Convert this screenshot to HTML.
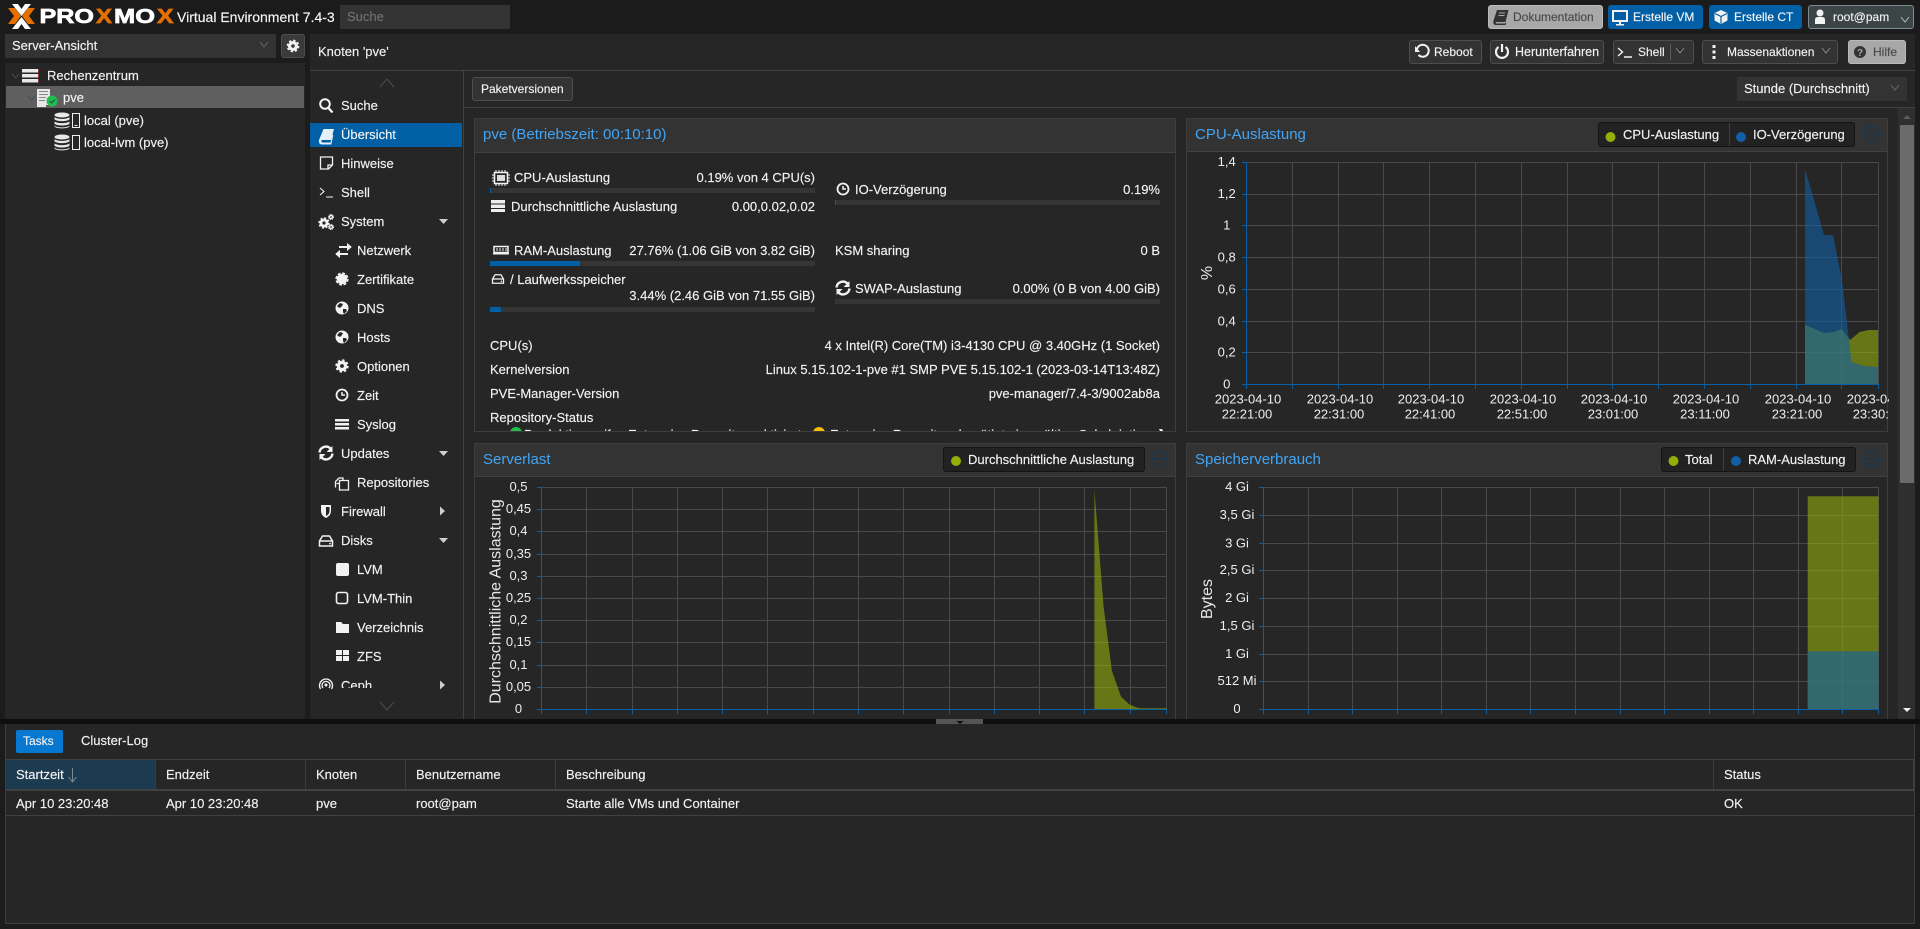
<!DOCTYPE html>
<html lang="de"><head><meta charset="utf-8"><title>pve - Proxmox Virtual Environment</title>
<style>
html,body{margin:0;padding:0;width:1920px;height:929px;overflow:hidden;background:#1c1c1c}
body{font:13px "Liberation Sans",Arial,sans-serif;color:#f2f2f2;position:relative}
.b,.t,.btn{position:absolute;box-sizing:border-box}
.t{white-space:nowrap;line-height:16px;height:16px;-webkit-text-stroke:.15px currentColor}
.r{text-align:right}
.btn{border-radius:3px;border:1px solid #4e4e4e;background:#333}
.f12{font-size:12px}
.h{color:#42a5f5;font-size:15px;line-height:18px;height:18px;-webkit-text-stroke:0}
.p{background:#262626;border:1px solid #3d3d3d}
.ph{background:#333;border-bottom:1px solid #414141}
.bar{position:absolute;height:5px;background:#353535}
.bar i{display:block;height:5px;background:#005fa5}
.leg{position:absolute;background:#222;border:1px solid #141414;border-radius:3px;box-sizing:border-box}
svg{position:absolute;left:0;top:0}
svg text{font-family:"Liberation Sans",Arial,sans-serif}
.tk{font-size:13px;fill:#eee;text-anchor:middle}
</style></head><body>

<!-- top -->
<div class="b" style="left:0;top:0;width:1920px;height:34px;background:#1b1b1b"></div>
<div class="t" style="left:177px;top:9px;font-size:14px;color:#f5f5f5">Virtual Environment 7.4-3</div>
<div class="b" style="left:340px;top:5px;width:170px;height:24px;background:#333"></div>
<div class="t" style="left:347px;top:9px;color:#707070">Suche</div>

<!-- left -->
<div class="b" style="left:5px;top:34px;width:271px;height:24px;background:#333"></div>
<div class="t" style="left:12px;top:38px">Server-Ansicht</div>
<div class="btn" style="left:281px;top:34px;width:24px;height:24px;background:#3a3a3a"></div>
<div class="b" style="left:5px;top:63px;width:300px;height:656px;background:#262626"></div>
<div class="b" style="left:6px;top:86px;width:298px;height:22px;background:#5f5f5f"></div>
<div class="t" style="left:47px;top:68px">Rechenzentrum</div>
<div class="t" style="left:63px;top:90px">pve</div>
<div class="t" style="left:84px;top:113px">local (pve)</div>
<div class="t" style="left:84px;top:135px">local-lvm (pve)</div>

<!-- main -->
<div class="b" style="left:310px;top:34px;width:1605px;height:685px;background:#262626"></div>
<div class="b" style="left:310px;top:70px;width:1605px;height:1px;background:#414141"></div>
<div class="b" style="left:463px;top:71px;width:1px;height:648px;background:#414141"></div>
<div class="b" style="left:464px;top:107px;width:1451px;height:1px;background:#414141"></div>
<div class="t" style="left:318px;top:44px">Knoten 'pve'</div>

<!-- top buttons -->
<div class="btn" style="left:1488px;top:5px;width:115px;height:24px;background:#a8a8a8;border-color:#bbb"></div>
<div class="t f12" style="left:1513px;top:9px;color:#4a4a4a">Dokumentation</div>
<div class="btn" style="left:1608px;top:5px;width:95px;height:24px;background:#005fa5;border-color:#005fa5"></div>
<div class="t f12" style="left:1633px;top:9px">Erstelle VM</div>
<div class="btn" style="left:1709px;top:5px;width:93px;height:24px;background:#005fa5;border-color:#005fa5"></div>
<div class="t f12" style="left:1734px;top:9px">Erstelle CT</div>
<div class="btn" style="left:1808px;top:5px;width:106px;height:24px;background:#3b4545;border-color:#7c8c8c"></div>
<div class="t f12" style="left:1833px;top:9px">root@pam</div>

<!-- toolbar buttons -->
<div class="btn" style="left:1409px;top:40px;width:73px;height:24px"></div>
<div class="t f12" style="left:1434px;top:44px">Reboot</div>
<div class="btn" style="left:1490px;top:40px;width:114px;height:24px"></div>
<div class="t f12" style="left:1515px;top:44px;font-size:12.5px">Herunterfahren</div>
<div class="btn" style="left:1613px;top:40px;width:81px;height:24px"></div>
<div class="b" style="left:1670px;top:44px;width:1px;height:16px;background:#5a5a5a"></div>
<div class="t f12" style="left:1638px;top:44px">Shell</div>
<div class="btn" style="left:1702px;top:40px;width:136px;height:24px"></div>
<div class="t f12" style="left:1727px;top:44px">Massenaktionen</div>
<div class="btn" style="left:1848px;top:40px;width:58px;height:24px;background:#a8a8a8;border-color:#bbb"></div>
<div class="t f12" style="left:1873px;top:44px;color:#4a4a4a">Hilfe</div>

<!-- menu -->
<div class="b" style="left:310px;top:123px;width:152px;height:24px;background:#005fa5"></div>
<div class="t" style="left:341px;top:98px">Suche</div>
<div class="t" style="left:341px;top:127px">Übersicht</div>
<div class="t" style="left:341px;top:156px">Hinweise</div>
<div class="t" style="left:341px;top:185px">Shell</div>
<div class="t" style="left:341px;top:214px">System</div>
<div class="t" style="left:357px;top:243px">Netzwerk</div>
<div class="t" style="left:357px;top:272px">Zertifikate</div>
<div class="t" style="left:357px;top:301px">DNS</div>
<div class="t" style="left:357px;top:330px">Hosts</div>
<div class="t" style="left:357px;top:359px">Optionen</div>
<div class="t" style="left:357px;top:388px">Zeit</div>
<div class="t" style="left:357px;top:417px">Syslog</div>
<div class="t" style="left:341px;top:446px">Updates</div>
<div class="t" style="left:357px;top:475px">Repositories</div>
<div class="t" style="left:341px;top:504px">Firewall</div>
<div class="t" style="left:341px;top:533px">Disks</div>
<div class="t" style="left:357px;top:562px">LVM</div>
<div class="t" style="left:357px;top:591px">LVM-Thin</div>
<div class="t" style="left:357px;top:620px">Verzeichnis</div>
<div class="t" style="left:357px;top:649px">ZFS</div>
<div class="b" style="left:341px;top:678px;width:100px;height:10px;overflow:hidden"><div class="t" style="left:0;top:0">Ceph</div></div>

<!-- content toolbar -->
<div class="btn" style="left:472px;top:77px;width:101px;height:24px"></div>
<div class="t f12" style="left:481px;top:81px">Paketversionen</div>
<div class="b" style="left:1737px;top:77px;width:170px;height:24px;background:#333"></div>
<div class="t" style="left:1744px;top:81px">Stunde (Durchschnitt)</div>

<!-- scrollbar -->
<div class="b" style="left:1898px;top:108px;width:17px;height:611px;background:#2f2f2f"></div>
<div class="b" style="left:1900px;top:125px;width:14px;height:358px;background:#6b6b6b"></div>

<!-- panel 1 -->
<div class="b p" style="left:474px;top:118px;width:702px;height:314px"></div>
<div class="b ph" style="left:475px;top:119px;width:700px;height:34px"></div>
<div class="t h" style="left:483px;top:126px">pve (Betriebszeit: 00:10:10)</div>

<div class="t" style="left:514px;top:170px">CPU-Auslastung</div>
<div class="t r" style="left:600px;width:215px;top:170px">0.19% von 4 CPU(s)</div>
<div class="bar" style="left:490px;top:188px;width:325px"><i style="width:1px"></i></div>
<div class="t" style="left:511px;top:199px">Durchschnittliche Auslastung</div>
<div class="t r" style="left:700px;width:115px;top:199px">0.00,0.02,0.02</div>
<div class="t" style="left:514px;top:243px">RAM-Auslastung</div>
<div class="t r" style="left:600px;width:215px;top:243px">27.76% (1.06 GiB von 3.82 GiB)</div>
<div class="bar" style="left:490px;top:261px;width:325px"><i style="width:90px"></i></div>
<div class="t" style="left:510px;top:272px">/ Laufwerksspeicher</div>
<div class="t r" style="left:600px;width:215px;top:288px">3.44% (2.46 GiB von 71.55 GiB)</div>
<div class="bar" style="left:490px;top:307px;width:325px"><i style="width:11px"></i></div>

<div class="t" style="left:855px;top:182px">IO-Verzögerung</div>
<div class="t r" style="left:1060px;width:100px;top:182px">0.19%</div>
<div class="bar" style="left:835px;top:200px;width:325px"><i style="width:1px"></i></div>
<div class="t" style="left:835px;top:243px">KSM sharing</div>
<div class="t r" style="left:1060px;width:100px;top:243px">0 B</div>
<div class="t" style="left:855px;top:281px">SWAP-Auslastung</div>
<div class="t r" style="left:960px;width:200px;top:281px">0.00% (0 B von 4.00 GiB)</div>
<div class="bar" style="left:835px;top:299px;width:325px"></div>

<div class="t" style="left:490px;top:338px">CPU(s)</div>
<div class="t r" style="left:700px;width:460px;top:338px">4 x Intel(R) Core(TM) i3-4130 CPU @ 3.40GHz (1 Socket)</div>
<div class="t" style="left:490px;top:362px">Kernelversion</div>
<div class="t r" style="left:700px;width:460px;top:362px">Linux 5.15.102-1-pve #1 SMP PVE 5.15.102-1 (2023-03-14T13:48Z)</div>
<div class="t" style="left:490px;top:386px">PVE-Manager-Version</div>
<div class="t r" style="left:700px;width:460px;top:386px">pve-manager/7.4-3/9002ab8a</div>
<div class="t" style="left:490px;top:410px">Repository-Status</div>
<div class="b" style="left:475px;top:424px;width:700px;height:7px;overflow:hidden">
  <div class="b" style="left:35px;top:3px;width:12px;height:12px;border-radius:50%;background:#21bf4b"></div>
  <div class="t" style="left:49px;top:3px">Produktionsreifes Enterprise Repository aktiviert</div>
  <div class="b" style="left:338px;top:3px;width:12px;height:12px;border-radius:50%;background:#fbbc05"></div>
  <div class="t" style="left:355px;top:3px">Enterprise Repository benötigt eine gültige Subskription</div>
  <div class="t" style="left:682px;top:3px">❯</div>
</div>

<!-- panel 2 -->
<div class="b p" style="left:1186px;top:118px;width:702px;height:314px"></div>
<div class="b ph" style="left:1187px;top:119px;width:700px;height:33px"></div>
<div class="t h" style="left:1195px;top:126px">CPU-Auslastung</div>
<div class="leg" style="left:1598px;top:122px;width:257px;height:25px"></div>
<div class="b" style="left:1729px;top:123px;width:1px;height:23px;background:#3f3f3f"></div>
<div class="t" style="left:1623px;top:127px">CPU-Auslastung</div>
<div class="t" style="left:1753px;top:127px">IO-Verzögerung</div>

<!-- panel 3 -->
<div class="b p" style="left:474px;top:443px;width:702px;height:290px"></div>
<div class="b ph" style="left:475px;top:444px;width:700px;height:33px"></div>
<div class="t h" style="left:483px;top:451px">Serverlast</div>
<div class="leg" style="left:943px;top:447px;width:202px;height:25px"></div>
<div class="t" style="left:968px;top:452px">Durchschnittliche Auslastung</div>

<!-- panel 4 -->
<div class="b p" style="left:1186px;top:443px;width:702px;height:290px"></div>
<div class="b ph" style="left:1187px;top:444px;width:700px;height:33px"></div>
<div class="t h" style="left:1195px;top:451px">Speicherverbrauch</div>
<div class="leg" style="left:1661px;top:447px;width:195px;height:25px"></div>
<div class="b" style="left:1723px;top:448px;width:1px;height:23px;background:#3f3f3f"></div>
<div class="t" style="left:1685px;top:452px">Total</div>
<div class="t" style="left:1748px;top:452px">RAM-Auslastung</div>

<!-- graphics -->
<svg width="1920" height="929" viewBox="0 0 1920 929">
<defs>
<clipPath id="cb"><rect x="0" y="0" width="1920" height="719"/></clipPath>
<clipPath id="cr"><rect x="1186" y="100" width="703" height="332"/></clipPath>
<g id="glob"><circle r="6.5" fill="#f2f2f2"/><path d="M-5 -2l3-3 3 1-1 2-2 2-2-1zM1 1l3 0 1 2-3 3-1-2z" fill="#262626"/></g>
<g id="cog"><circle r="3.600" fill="none" stroke="#f2f2f2" stroke-width="3.400"/><circle r="5.600" fill="none" stroke="#f2f2f2" stroke-width="2.200" stroke-dasharray="2.300 2.100"/></g>
<g id="swap"><path d="M-6.5 -.5a6.5 6.5 0 0 1 11-4M6.5 .5a6.5 6.5 0 0 1-11 4" fill="none" stroke="#f2f2f2" stroke-width="2.400"/><path d="M6.5 -7v6h-6zM-6.5 7v-6h6z" fill="#f2f2f2"/></g>
<g id="clk"><circle r="5.5" fill="none" stroke="#f2f2f2" stroke-width="1.8"/><path d="M0 -3v3h3" fill="none" stroke="#f2f2f2" stroke-width="1.5"/></g>
<g id="hdd"><path d="M-3.5 -5h7l3 5v5h-13v-5zM-6.5 0h13" fill="none" stroke="#f2f2f2" stroke-width="1.5"/><circle cx="4" cy="2.6" r=".9" fill="#f2f2f2"/></g>
<g id="shell"><path d="M-7 -4l4.5 4-4.500 4M-1 5h8" fill="none" stroke="#f2f2f2" stroke-width="1.4"/></g>
<g id="cyl" fill="#e8e8e8"><ellipse cy="-5.500" rx="7.500" ry="2.500"/><path d="M-7.500 -3.500c2 2.500 13 2.500 15 0v2.300c-2 2.500-13 2.500-15 0zM-7.500 .8c2 2.500 13 2.500 15 0v2.300c-2 2.500-13 2.500-15 0zM-7.500 5c2 2.500 13 2.500 15 0v1c-2 2.500-13 2.500-15 0z"/></g>
</defs>

<!-- logo -->
<path d="M8 8h7l6 8-6 8H8l6-8zM35 8h-7l-6 8 6 8h7l-6-8z" fill="#e57000"/>
<path d="M12 4h6l3.500 5L25 4h6l-9.500 12zM12 29h6l3.500-5 3.500 5h6l-9.500-12z" fill="#fff"/>
<g font-weight="700" font-size="20" stroke-width=".7">
<text x="39.500" y="23" textLength="54.500" lengthAdjust="spacingAndGlyphs" fill="#fff" stroke="#fff">PRO</text>
<text x="96" y="23" textLength="16" lengthAdjust="spacingAndGlyphs" fill="#e57000" stroke="#e57000">X</text>
<text x="114" y="23" textLength="41" lengthAdjust="spacingAndGlyphs" fill="#fff" stroke="#fff">MO</text>
<text x="157" y="23" textLength="16.500" lengthAdjust="spacingAndGlyphs" fill="#e57000" stroke="#e57000">X</text>
</g>

<!-- combo chevrons -->
<g fill="none" stroke-width="1">
<path d="M260 42l4 5 4-5" stroke="#6a6a6a"/>
<path d="M1901 17l4 5 4-5" stroke="#bbb"/>
<path d="M1676 48l4 5 4-5M1822 48l4 5 4-5" stroke="#8a8a8a"/>
<path d="M1891 85l4 5 4-5" stroke="#6a6a6a"/>
<path d="M380 87l7-8 7 8M380 702l7 8 7-8" stroke="#4e4e4e"/>
<path d="M12 74l3.500 4 3.500-4M28 96l3.500 4 3.500-4" stroke="#4c4c4c"/>
</g>
<g transform="translate(293,46) scale(.95)"><use href="#cog"/></g>

<!-- tree icons -->
<g fill="#e8e8e8">
<rect x="22" y="69" width="17" height="3.500"/><rect x="22" y="74" width="17" height="3.500"/><rect x="22" y="79" width="17" height="3.500"/>
<path d="M38 69h1v3.500h-1zM38 74h1v3.500h-1zM38 79h1v3.500h-1z" fill="#933"/>
<path d="M37 89h13v16h-4v2h-9z"/><path d="M39 91h9v1h-9zM39 94h9v1h-9zM39 97h7v1h-7zM39 100h6v1h-6z" fill="#888"/>
</g>
<circle cx="52" cy="101" r="5.500" fill="#21bf4b"/><path d="M49.500 101l2 2 3.500-3.500" fill="none" stroke="#165" stroke-width="1.300"/>
<use href="#cyl" x="62" y="120.500"/><use href="#cyl" x="62" y="142.500"/>
<g fill="none" stroke="#eee"><rect x="72.500" y="113.500" width="7" height="14"/><rect x="72.500" y="135.500" width="7" height="14"/></g>
<path d="M74.500 125.500h3" stroke="#eee"/>

<!-- button icons -->
<g>
<path d="M1497 10h11.500l-3 12h-9c-1 0-1 1.500 0 1.500h8.500l.8-1 .5.800-1 1.700h-9.500c-2 0-3-2-2.300-4.500z" fill="#333"/><path d="M1499 13h6M1498.500 15.500h6" stroke="#a8a8a8"/>
<rect x="1613" y="11" width="14" height="10" fill="none" stroke="#f2f2f2" stroke-width="2"/><path d="M1616 24h8v1.500h-8zM1619 22h2v2h-2z" fill="#f2f2f2"/>
<path d="M1721 10l6.500 3v7.500l-6.500 3.500-6.500-3.500V13z" fill="#f2f2f2"/><path d="M1715 13.500l6 3 6-3M1721 16.500v7" fill="none" stroke="#005fa5" stroke-width="1.200"/>
<circle cx="1820" cy="13" r="3.500" fill="#f2f2f2"/><path d="M1815 24v-4c0-3 2-3 5-3s5 0 5 3v4z" fill="#f2f2f2"/>
<path d="M1417 49a6 6 0 1 1 1.500 6" fill="none" stroke="#f2f2f2" stroke-width="2"/><path d="M1415 46v6h5z" fill="#f2f2f2"/>
<path d="M1498.500 47a6 6 0 1 0 7 0" fill="none" stroke="#f2f2f2" stroke-width="2.200"/><path d="M1502 44v8" stroke="#f2f2f2" stroke-width="2.200"/>
<use href="#shell" x="1625" y="52"/>
<path d="M1712.500 45h3v3h-3zM1712.500 50.500h3v3h-3zM1712.500 56h3v3h-3z" fill="#f2f2f2"/>
<circle cx="1860" cy="52" r="6" fill="#333"/><text x="1860" y="56" font-size="10" font-weight="700" fill="#a8a8a8" text-anchor="middle">?</text>
</g>

<!-- menu icons -->
<g fill="none" stroke="#f2f2f2">
<circle cx="325" cy="104" r="4.800" stroke-width="2"/><path d="M328.500 108l4 4.500" stroke-width="2.300"/>
<path d="M323.500 129h10.500l-3 11h-8.500c-1.500 0-1.500 2.500 0 2.500h8l2-8 .8 1-2 9h-9.300c-2.500 0-3.500-2-3-4.500z" stroke="none" fill="#e6f0f8"/>
<path d="M320.500 157h12v8l-4 4h-8zM332 165h-4v4" stroke-width="1.300"/>
<path d="M320 188l4 3.500-4 3.500M326 197h7" stroke-width="1.100"/>
<path d="M339 247h12M336 254h12" stroke-width="2"/>
<path d="M351 247l-3.500-3v6zM336 254l3.500-3v6z" fill="#f2f2f2"/>
</g>
<g transform="translate(324,223) scale(.85)"><use href="#cog"/></g>
<g transform="translate(331,217) scale(.45)"><use href="#cog"/></g>
<g transform="translate(331,227) scale(.45)"><use href="#cog"/></g>
<g fill="#f2f2f2">
<circle cx="342" cy="279" r="5.300"/><circle cx="342" cy="279" r="5.900" fill="none" stroke="#f2f2f2" stroke-width="1.500" stroke-dasharray="2.900 1.730"/>
<path d="M335 419h14v2.500h-14zM335 423h14v2.500h-14zM335 427h14v2.500h-14z"/>
<path d="M321 505h10v6c0 4-3 6-5 7-2-1-5-3-5-7zM326 507v9c1.500-1 3.500-2 3.500-5v-4z" fill-rule="evenodd"/>
<rect x="336" y="563" width="13" height="13" rx="2"/>
<path d="M336 622h5l2 2h6v9h-13z"/>
<path d="M336 650h6v5h-6zM343 650h6v5h-6zM336 656h6v5h-6zM343 656h6v5h-6z"/>
<path d="M439 219h9l-4.500 5zM439 451h9l-4.500 5zM439 538h9l-4.500 5zM440 506.500l5 4.500-5 4.500zM440 680.500l5 4.500-5 4.500z" fill="#cfcfcf"/>
</g>
<use href="#glob" x="342" y="308"/><use href="#glob" x="342" y="337"/>
<use href="#cog" x="342" y="366"/><use href="#clk" x="342" y="395"/>
<use href="#swap" x="326" y="453"/>
<use href="#hdd" x="326" y="541"/>
<g fill="none" stroke="#f2f2f2" stroke-width="1.300">
<path d="M335.500 487.500v-6l3.500-3.500h4v2.500M339.500 480.500h9v9.500h-9zM339.500 480.500v3h-3"/>
<rect x="336.500" y="592.500" width="11" height="11" rx="2" stroke-width="1.600"/>
</g>
<g clip-path="url(#cb)"><path d="M320.500 689a6.500 6.500 0 1 1 11 0M323 688a4 4 0 1 1 6 0" fill="none" stroke="#f2f2f2" stroke-width="1.300"/><circle cx="326" cy="685" r="1.500" fill="#f2f2f2"/></g>

<!-- status icons -->
<g>
<path d="M494.500 172.500h13v11h-13z" fill="none" stroke="#f2f2f2" stroke-width="1.500"/><rect x="497" y="175" width="8" height="6" fill="#ddd"/>
<path d="M496 170v2M499 170v2M502 170v2M505 170v2M496 184v2M499 184v2M502 184v2M505 184v2M492 175h2M492 178h2M492 181h2M508 175h2M508 178h2M508 181h2" stroke="#f2f2f2"/>
<path d="M491 200h14v3.500h-14zM491 204.500h14v3.500h-14zM491 209h14v3h-14z" fill="#eee"/>
<rect x="494" y="246.500" width="14" height="6" fill="none" stroke="#f2f2f2" stroke-width="1.500"/><path d="M497 248v3M500 248v3M503 248v3M506 248v3" stroke="#f2f2f2"/><path d="M493 253h16v1.500h-16z" fill="#f2f2f2"/>
</g>
<g transform="translate(498,279) scale(.85)"><use href="#hdd"/></g>
<use href="#clk" x="843" y="189"/><use href="#swap" x="843" y="288"/>

<!-- legends -->
<g fill="#94ae0a"><circle cx="1610.500" cy="137" r="5"/><circle cx="956" cy="461" r="5"/><circle cx="1673.500" cy="461" r="5"/></g>
<g fill="#115fa6"><circle cx="1741" cy="137" r="5"/><circle cx="1736" cy="461" r="5"/></g>
<g fill="none" stroke="#17374f" stroke-width="1.300">
<circle cx="1871" cy="134" r="7.500"/><path d="M1864 134h14"/>
<circle cx="1159" cy="459" r="7.500"/><path d="M1152 459h14"/>
<circle cx="1871" cy="459" r="7.500"/><path d="M1864 459h14"/>
</g>

<!-- chart 1 -->
<g clip-path="url(#cr)">
<path shape-rendering="crispEdges" fill="none" stroke="#494949" d="M1247 162.500H1878M1247 194.500H1878M1247 225.500H1878M1247 257.500H1878M1247 289.500H1878M1247 321.500H1878M1247 352.500H1878M1292.500 162V384M1338.500 162V384M1383.500 162V384M1429.500 162V384M1475.500 162V384M1521.500 162V384M1567.500 162V384M1612.500 162V384M1658.500 162V384M1704.500 162V384M1750.500 162V384M1796.500 162V384M1841.500 162V384M1878.500 162V384"/>
<path d="M1805 325L1812.400 328 1824 333 1833.600 332 1841.600 329 1850 340 1859.600 332 1869 330 1878 330V384H1805z" fill="#94ae0a" fill-opacity=".6"/>
<path d="M1805 169L1824 235 1833 235 1842 280 1851.500 362 1864 366 1878 367V384H1805z" fill="#115fa6" fill-opacity=".6"/>
<path shape-rendering="crispEdges" fill="none" stroke="#0b5fa5" d="M1246.500 162V384.500H1878.500M1242 162.500h5M1242 194.500h5M1242 225.500h5M1242 257.500h5M1242 289.500h5M1242 321.500h5M1242 352.500h5M1242 384.500h5M1246.500 384v5M1292.500 384v5M1338.500 384v5M1383.500 384v5M1429.500 384v5M1475.500 384v5M1521.500 384v5M1567.500 384v5M1612.500 384v5M1658.500 384v5M1704.500 384v5M1750.500 384v5M1796.500 384v5M1841.500 384v5M1878.500 384v5"/>
<text class="tk" x="1226.700" y="166">1,4</text><text class="tk" x="1226.700" y="198">1,2</text><text class="tk" x="1226.700" y="229.500">1</text><text class="tk" x="1226.700" y="261.500">0,8</text><text class="tk" x="1226.700" y="293.500">0,6</text><text class="tk" x="1226.700" y="325.500">0,4</text><text class="tk" x="1226.700" y="356.500">0,2</text><text class="tk" x="1226.700" y="388.500">0</text>
<g class="tk" text-anchor="middle" font-size="13" fill="#eee">
<text x="1248" y="403.500">2023-04-10</text><text x="1247" y="418.500">22:21:00</text>
<text x="1340" y="403.500">2023-04-10</text><text x="1339" y="418.500">22:31:00</text>
<text x="1431" y="403.500">2023-04-10</text><text x="1430" y="418.500">22:41:00</text>
<text x="1523" y="403.500">2023-04-10</text><text x="1522" y="418.500">22:51:00</text>
<text x="1614" y="403.500">2023-04-10</text><text x="1613" y="418.500">23:01:00</text>
<text x="1706" y="403.500">2023-04-10</text><text x="1705" y="418.500">23:11:00</text>
<text x="1798" y="403.500">2023-04-10</text><text x="1797" y="418.500">23:21:00</text>
<text x="1880" y="403.500">2023-04-10</text><text x="1878" y="418.500">23:30:00</text>
</g>
<text x="0" y="0" font-size="16" fill="#e6e6e6" text-anchor="middle" transform="translate(1212,273) rotate(-90)">%</text>
</g>

<g clip-path="url(#cb)">
<!-- chart 3 -->
<path shape-rendering="crispEdges" fill="none" stroke="#494949" d="M542 487.500H1166M542 509.500H1166M542 531.500H1166M542 554.500H1166M542 576.500H1166M542 598.500H1166M542 620.500H1166M542 642.500H1166M542 665.500H1166M542 687.500H1166M586.500 487V709M632.500 487V709M677.500 487V709M722.500 487V709M767.500 487V709M813.500 487V709M858.500 487V709M903.500 487V709M949.500 487V709M994.500 487V709M1039.500 487V709M1084.500 487V709M1130.500 487V709M1166.500 487V709"/>
<path d="M1094.400 490L1103.600 606.700 1111.900 670.700 1121 696.700 1130 705 1139.400 708.300 1166.500 708.300V709.300H1094.400z" fill="#94ae0a" fill-opacity=".6"/>
<path shape-rendering="crispEdges" fill="none" stroke="#0b5fa5" d="M541.500 487V709.500H1166.500M537 487.500h5M537 509.500h5M537 531.500h5M537 554.500h5M537 576.500h5M537 598.500h5M537 620.500h5M537 642.500h5M537 665.500h5M537 687.500h5M537 709.500h5M541.500 709v5M586.500 709v5M632.500 709v5M677.500 709v5M722.500 709v5M767.500 709v5M813.500 709v5M858.500 709v5M903.500 709v5M949.500 709v5M994.500 709v5M1039.500 709v5M1084.500 709v5M1130.500 709v5M1166.500 709v5"/>
<text class="tk" x="518.500" y="491">0,5</text><text class="tk" x="518.500" y="513">0,45</text><text class="tk" x="518.500" y="535">0,4</text><text class="tk" x="518.500" y="558">0,35</text><text class="tk" x="518.500" y="580">0,3</text><text class="tk" x="518.500" y="602">0,25</text><text class="tk" x="518.500" y="624">0,2</text><text class="tk" x="518.500" y="646">0,15</text><text class="tk" x="518.500" y="669">0,1</text><text class="tk" x="518.500" y="691">0,05</text><text class="tk" x="518.500" y="713">0</text>
<text font-size="16" fill="#e6e6e6" text-anchor="middle" transform="translate(500.500,601.500) rotate(-90)">Durchschnittliche Auslastung</text>

<!-- chart 4 -->
<path shape-rendering="crispEdges" fill="none" stroke="#494949" d="M1264 487.500H1878M1264 515.500H1878M1264 543.500H1878M1264 570.500H1878M1264 598.500H1878M1264 626.500H1878M1264 654.500H1878M1264 681.500H1878M1308.500 487V709M1352.500 487V709M1397.500 487V709M1441.500 487V709M1486.500 487V709M1530.500 487V709M1575.500 487V709M1620.500 487V709M1664.500 487V709M1709.500 487V709M1753.500 487V709M1798.500 487V709M1842.500 487V709M1878.500 487V709"/>
<rect x="1807.700" y="496.300" width="70.800" height="212.900" fill="#94ae0a" fill-opacity=".6"/>
<rect x="1807.700" y="651.300" width="70.800" height="57.900" fill="#115fa6" fill-opacity=".6"/>
<path shape-rendering="crispEdges" fill="none" stroke="#0b5fa5" d="M1263.500 487V709.500H1878.500M1259 487.500h5M1259 515.500h5M1259 543.500h5M1259 570.500h5M1259 598.500h5M1259 626.500h5M1259 654.500h5M1259 681.500h5M1259 709.500h5M1263.500 709v5M1308.500 709v5M1352.500 709v5M1397.500 709v5M1441.500 709v5M1486.500 709v5M1530.500 709v5M1575.500 709v5M1620.500 709v5M1664.500 709v5M1709.500 709v5M1753.500 709v5M1798.500 709v5M1842.500 709v5M1878.500 709v5"/>
<text class="tk" x="1237" y="491">4 Gi</text><text class="tk" x="1237" y="519">3,5 Gi</text><text class="tk" x="1237" y="547.500">3 Gi</text><text class="tk" x="1237" y="574">2,5 Gi</text><text class="tk" x="1237" y="602">2 Gi</text><text class="tk" x="1237" y="630">1,5 Gi</text><text class="tk" x="1237" y="658">1 Gi</text><text class="tk" x="1237" y="685">512 Mi</text><text class="tk" x="1237" y="713">0</text>
<text font-size="16" fill="#e6e6e6" text-anchor="middle" transform="translate(1212,599) rotate(-90)">Bytes</text>
</g>

<!-- scrollbar arrows -->
<path d="M1903 119l4-4 4 4z" fill="#5c5c5c"/><path d="M1903 708l4 4 4-4z" fill="#f2f2f2"/>
</svg>

<!-- splitter and bottom -->
<div class="b" style="left:0;top:719px;width:1920px;height:5px;background:#0f0f0f"></div>
<div class="b" style="left:936px;top:719px;width:47px;height:5px;background:#555"></div>
<div class="b" style="left:956px;top:721px;width:0;height:0;border-left:4px solid transparent;border-right:4px solid transparent;border-top:3px solid #111"></div>
<div class="b" style="left:5px;top:724px;width:1910px;height:200px;background:#262626;border-left:1px solid #3d3d3d;border-right:1px solid #3d3d3d;border-bottom:1px solid #3d3d3d"></div>
<div class="b" style="left:16px;top:730px;width:47px;height:23px;background:#0678d0;border-radius:2px"></div>
<div class="t f12" style="left:23px;top:733px">Tasks</div>
<div class="t" style="left:81px;top:733px">Cluster-Log</div>

<div class="b" style="left:6px;top:759px;width:1908px;height:1px;background:#414141"></div>
<div class="b" style="left:6px;top:760px;width:150px;height:29px;background:#1c3a50"></div>
<div class="b" style="left:6px;top:789px;width:1908px;height:2px;background:#414141"></div>
<div class="b" style="left:6px;top:815px;width:1908px;height:1px;background:#414141"></div>
<div class="b" style="left:155px;top:760px;width:1px;height:29px;background:#3d3d3d"></div>
<div class="b" style="left:305px;top:760px;width:1px;height:29px;background:#3d3d3d"></div>
<div class="b" style="left:405px;top:760px;width:1px;height:29px;background:#3d3d3d"></div>
<div class="b" style="left:555px;top:760px;width:1px;height:29px;background:#3d3d3d"></div>
<div class="b" style="left:1713px;top:760px;width:1px;height:29px;background:#3d3d3d"></div>
<div class="b" style="left:1913px;top:760px;width:1px;height:29px;background:#3d3d3d"></div>
<div class="t" style="left:16px;top:767px">Startzeit</div>
<svg width="1920" height="929" viewBox="0 0 1920 929" style="pointer-events:none"><path d="M72.500 768v14M68.500 777l4 5 4-5" fill="none" stroke="#7b8a96"/></svg>
<div class="t" style="left:166px;top:767px">Endzeit</div>
<div class="t" style="left:316px;top:767px">Knoten</div>
<div class="t" style="left:416px;top:767px">Benutzername</div>
<div class="t" style="left:566px;top:767px">Beschreibung</div>
<div class="t" style="left:1724px;top:767px">Status</div>
<div class="t" style="left:16px;top:796px">Apr 10 23:20:48</div>
<div class="t" style="left:166px;top:796px">Apr 10 23:20:48</div>
<div class="t" style="left:316px;top:796px">pve</div>
<div class="t" style="left:416px;top:796px">root@pam</div>
<div class="t" style="left:566px;top:796px">Starte alle VMs und Container</div>
<div class="t" style="left:1724px;top:796px">OK</div>
</body></html>
